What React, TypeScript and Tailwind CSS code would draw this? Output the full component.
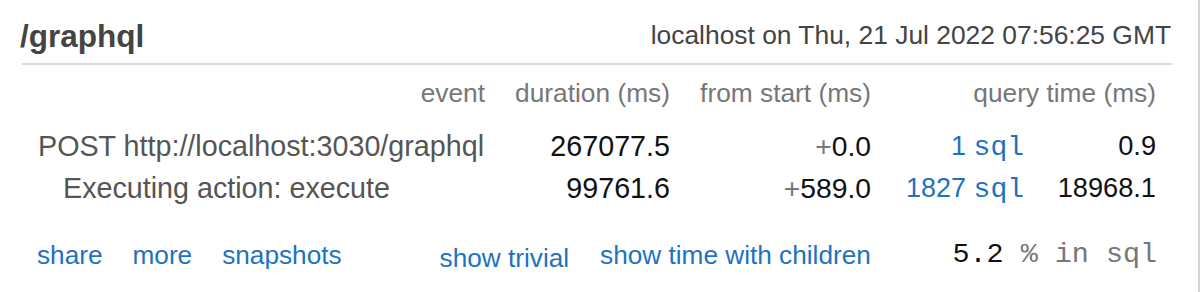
const sans = { fontFamily: '"Liberation Sans", Arial, Helvetica, sans-serif' };

function Sql({ n }: { n: string }) {
  return (
    <a className="text-[#1d72c2]">
      {n} <span className="font-['Liberation_Mono',monospace] text-[28px]">sql</span>
    </a>
  );
}

export default function App() {
  return (
    <div
      className="w-[1200px] h-[292px] bg-white border-r-[2px] border-[#d4d4d4] overflow-hidden"
      style={sans}
    >
      <div className="flex items-end justify-between pl-[20px] pr-[27px] pt-[18px] h-[52px]">
        <h1 className="text-[31.5px] leading-none font-bold text-[#444]">/graphql</h1>
        <span className="text-[26.4px] leading-none text-[#444] pb-[4px]">
          localhost on Thu, 21 Jul 2022 07:56:25 GMT
        </span>
      </div>
      <div className="ml-[22px] w-[1150px] h-[2px] bg-[#dcdcdc] mt-[11px]" />

      <div className="grid grid-cols-[463px_185px_201px_153px_132px] ml-[22px] leading-[28px] whitespace-nowrap">
        <div className="text-right text-[#777] text-[26.3px] mt-[14px]">event</div>
        <div className="text-right text-[#777] text-[26.3px] mt-[14px]">duration (ms)</div>
        <div className="text-right text-[#777] text-[26.3px] mt-[14px]">from start (ms)</div>
        <div className="col-span-2 text-right text-[#777] text-[26.3px] mt-[14px]">
          query time (ms)
        </div>

        <div className="pl-[16px] text-[#555] text-[28.7px] mt-[25px]">
          POST http://localhost:3030/graphql
        </div>
        <div className="text-right text-[#111] text-[28.7px] mt-[25px]">267077.5</div>
        <div className="text-right text-[#111] text-[28.3px] mt-[25px]">
          <span className="text-[#777]">+</span>0.0
        </div>
        <div className="text-right text-[27px] mt-[25px]">
          <Sql n="1" />
        </div>
        <div className="text-right text-[#111] text-[27.2px] mt-[25px]">0.9</div>

        <div className="pl-[41px] text-[#555] text-[28.7px] mt-[12px]">
          Executing action: execute
        </div>
        <div className="text-right text-[#111] text-[28.7px] mt-[12px]">99761.6</div>
        <div className="text-right text-[#111] text-[28.3px] mt-[12px]">
          <span className="text-[#777]">+</span>589.0
        </div>
        <div className="text-right text-[27px] mt-[12px]">
          <Sql n="1827" />
        </div>
        <div className="text-right text-[#111] text-[27.2px] mt-[12px]">18968.1</div>
      </div>

      <div className="flex items-end ml-[37px] w-[1120px] text-[26.2px] leading-[28px] text-[#1d72c2] mt-[37px] whitespace-nowrap">
        <a>share</a>
        <a className="ml-[30px]">more</a>
        <a className="ml-[30px]">snapshots</a>
        <a className="ml-[98px] translate-y-[3px]">show trivial</a>
        <a className="ml-[31px]">show time with children</a>
        <span className="ml-auto font-['Liberation_Mono',monospace] text-[28.4px] text-[#777]">
          <span className="text-[#111]">5.2</span> % in sql
        </span>
      </div>
    </div>
  );
}
